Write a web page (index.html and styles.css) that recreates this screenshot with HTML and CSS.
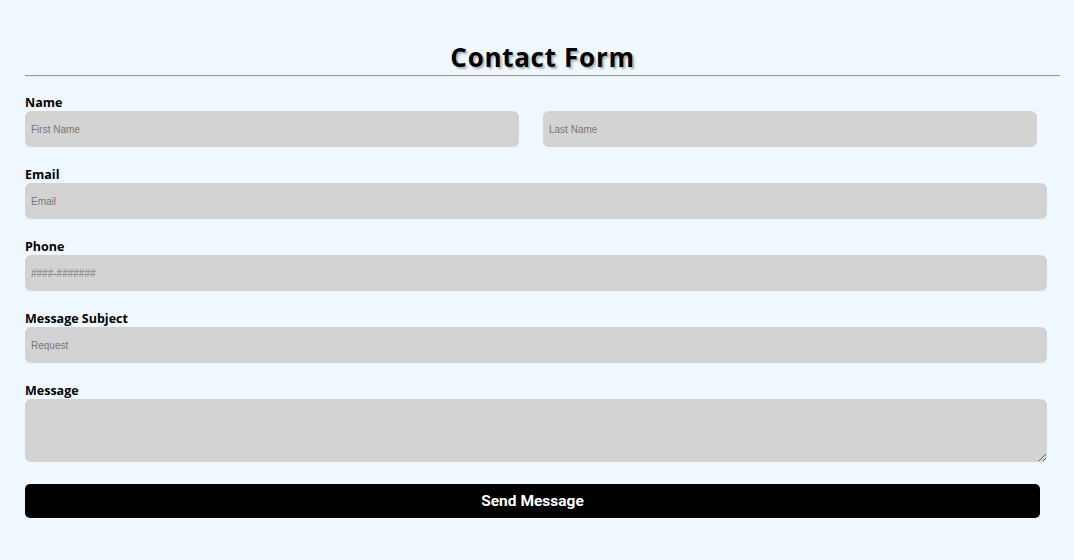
FILE: index.html
```html
<!DOCTYPE html>
<html>
<head>
<meta charset="utf-8">
<link rel="stylesheet" href="styles.css">
</head>
<body>
<div class="page">
  <h1 class="title">Contact Form</h1>
  <hr class="rule">
  <form class="form">
    <div class="group">
      <label class="label">Name</label>
      <div class="row">
        <input class="field half" type="text" placeholder="First Name">
        <input class="field half" type="text" placeholder="Last Name">
      </div>
    </div>
    <div class="group">
      <label class="label">Email</label>
      <input class="field full" type="text" placeholder="Email">
    </div>
    <div class="group">
      <label class="label">Phone</label>
      <input class="field full" type="text" placeholder="####-#######">
    </div>
    <div class="group">
      <label class="label">Message Subject</label>
      <input class="field full" type="text" placeholder="Request">
    </div>
    <div class="group">
      <label class="label">Message</label>
      <textarea class="field full area"></textarea>
    </div>
    <button class="send" type="button">Send Message</button>
  </form>
</div>
</body>
</html>
```
FILE: styles.css
```css
html, body {
  margin: 0;
  padding: 0;
  background: #f0f8ff;
}
.page {
  width: 1035px;
  margin-left: 25px;
  padding-top: 40px;
  font-family: "Open Sans", "Noto Sans", sans-serif;
}
.title {
  margin: 0;
  text-align: center;
  font-size: 26px;
  line-height: 35px;
  font-weight: 700;
  letter-spacing: 0.7px;
  color: #000;
  text-shadow: 2px 2px 2px #b0b0b0;
}
.rule {
  margin: 0;
  border: 0;
  border-top: 1px solid #999;
  border-bottom: 1px solid #e8eef4;
}
.form {
  display: flex;
  flex-direction: column;
  padding-top: 18px;
}
.group {
  display: flex;
  flex-direction: column;
  margin-bottom: 20px;
}
.label {
  font-size: 12.5px;
  line-height: 16px;
  font-weight: 700;
  color: #000;
}
.row {
  display: flex;
  gap: 24px;
}
.field {
  box-sizing: border-box;
  height: 36px;
  border: none;
  border-radius: 6px;
  background: #d3d3d3;
  padding: 0 6px;
  font-family: "Liberation Sans", Arial, sans-serif;
  font-size: 10px;
  outline: none;
}
.field::placeholder {
  color: #777;
}
.half {
  width: 494px;
}
.full {
  width: 1022px;
}
.area {
  height: 63px;
  resize: vertical;
  display: block;
}
.send {
  width: 1015px;
  height: 34px;
  margin-top: 2px;
  border: none;
  border-radius: 5px;
  background: #000;
  color: #fff;
  font-family: "Roboto", "Liberation Sans", sans-serif;
  font-weight: 700;
  font-size: 15.5px;
}
```
